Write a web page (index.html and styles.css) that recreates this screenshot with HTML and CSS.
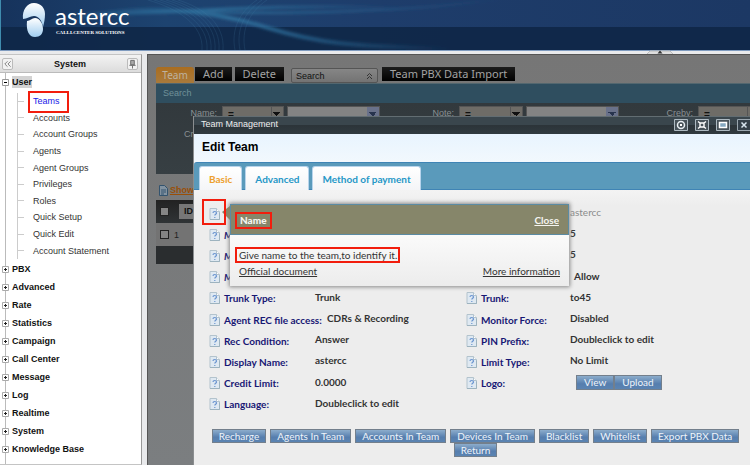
FILE: index.html
```html
<!DOCTYPE html>
<html lang="en">
<head>
<meta charset="utf-8">
<title>astercc - Team Management</title>
<link rel="stylesheet" href="styles.css">
</head>
<body>
<svg class="defs" aria-hidden="true">
  <defs>
    <symbol id="help" viewBox="0 0 11 12">
      <path d="M1 .5h6.500l3 3v8H1z" fill="#dfe9f2" stroke="#b3c3cd"/>
      <path d="M7.500 .5v3h3" fill="#fff" stroke="#b3c3cd"/>
      <path d="M1 11.500h9.500v-7" fill="none" stroke="#9db3bf"/>
      <path d="M4 5c0-2 3.500-2 3.500 0 0 1.300-1.700 1.200-1.700 2.500M5.800 9v1" fill="none" stroke="#6a94cf" stroke-width="1.200"/>
    </symbol>
    <symbol id="plus" viewBox="0 0 7 7">
      <path d="M.5 .5h6v6h-6z" fill="#fff" stroke="#aaa"/>
      <path d="M2 3.500h3M3.500 2v3" stroke="#222"/>
    </symbol>
  </defs>
</svg>

<header class="banner">
  <svg class="waves" viewBox="0 0 750 50" preserveAspectRatio="xMinYMin slice" aria-hidden="true">
    <defs>
      <linearGradient id="sky" x1="0" y1="0" x2="1" y2="0">
        <stop offset="0" stop-color="#16335c"/><stop offset=".22" stop-color="#1d4370"/><stop offset=".5" stop-color="#1e3d6b"/><stop offset="1" stop-color="#1c3864"/>
      </linearGradient>
      <linearGradient id="glow" x1="0" y1="0" x2="1" y2="0">
        <stop offset="0" stop-color="#2a6a9a" stop-opacity="0"/><stop offset=".45" stop-color="#2d6c98"/><stop offset="1" stop-color="#2a6a9a" stop-opacity="0"/>
      </linearGradient>
      <filter id="soft" x="-10%" y="-50%" width="120%" height="200%"><feGaussianBlur stdDeviation="1.500"/></filter>
    </defs>
    <path fill="url(#sky)" d="M0 0h750v50H0z"/>
    <path fill="#0f2748" d="M0 27h750v23H0z" opacity=".92"/>
    <g fill="none" stroke="url(#glow)" filter="url(#soft)">
      <path stroke-width="4" d="M50 25C130 0 210 10 265 27S350 46 450 49"/>
      <path stroke-width="2" d="M40 24C150 4 200 16 330 12S460 2 500 0"/>
      <path stroke-width="3" d="M60 14C130 18 250 2 400 8"/>
    </g>
    <g fill="none" stroke="#4b86ad" stroke-width=".6" opacity=".3">
      <path d="M148 0C176 8 204 24 202 50"/><path d="M154 0C182 8 209 24 207 50"/><path d="M160 0C188 8 213 24 211 50"/>
      <path d="M166 0C194 8 217 24 215 50"/><path d="M172 0C198 8 221 24 219 50"/><path d="M178 0C204 8 225 24 223 50"/>
      <path d="M240 50C236 30 244 12 262 0"/><path d="M245 50C241 30 249 12 267 0"/><path d="M235 50C231 30 239 12 257 0"/>
    </g>
    <path fill="#3f8cae" d="M0 0h1v50H0z"/>
  </svg>
  <svg class="logo" viewBox="0 0 24 36" aria-hidden="true">
    <defs><linearGradient id="ice" x1="0" y1="0" x2="0" y2="1"><stop offset="0" stop-color="#fff"/><stop offset="1" stop-color="#9fcdf0"/></linearGradient></defs>
    <path fill="url(#ice)" d="M1 17C0 8 5 1 12 1c7 0 11 5 11 11 0 5-1 9-2 13-1-6-4-11-9-11-4 0-7 3-11 3z"/>
    <path fill="url(#ice)" d="M5 19c3 0 5-3 8-3 5 0 8 6 8 11 0 5-3 8-8 8-6 0-9-6-8-16z"/>
  </svg>
  <div class="brand"><span class="name">astercc</span><span class="tagline">CALLLCENTER SOLUTIONS</span></div>
</header>

<div class="workspace">
  <nav class="sidebar" aria-label="System">
    <div class="side-head">
      <button class="tool" aria-label="Collapse"><svg viewBox="0 0 10 10"><path d="M5 2L2 5l3 3M8.500 2l-3 3 3 3" fill="none" stroke="#777"/></svg></button>
      <span>System</span>
      <button class="tool" aria-label="Pin"><svg viewBox="0 0 10 10"><path d="M3 1h4v5H3zM1.500 6.500h7M5 7v3" fill="#aaa" stroke="#666"/></svg></button>
    </div>
    <ul class="tree">
      <li class="open">
        <div class="node"><svg viewBox="0 0 7 7"><path d="M.5 .5h6v6h-6z" fill="#fff" stroke="#999"/><path d="M2 3.500h3" stroke="#000"/></svg><span class="current">User</span></div>
        <ul class="branch">
          <li><a class="active" href="#">Teams</a></li><li><a href="#">Accounts</a></li><li><a href="#">Account Groups</a></li><li><a href="#">Agents</a></li><li><a href="#">Agent Groups</a></li><li><a href="#">Privileges</a></li><li><a href="#">Roles</a></li><li><a href="#">Quick Setup</a></li><li><a href="#">Quick Edit</a></li><li><a href="#">Account Statement</a></li>
        </ul>
      </li>
      <li class="node"><svg><use href="#plus"/></svg>PBX</li>
      <li class="node"><svg><use href="#plus"/></svg>Advanced</li>
      <li class="node"><svg><use href="#plus"/></svg>Rate</li>
      <li class="node"><svg><use href="#plus"/></svg>Statistics</li>
      <li class="node"><svg><use href="#plus"/></svg>Campaign</li>
      <li class="node"><svg><use href="#plus"/></svg>Call Center</li>
      <li class="node"><svg><use href="#plus"/></svg>Message</li>
      <li class="node"><svg><use href="#plus"/></svg>Log</li>
      <li class="node"><svg><use href="#plus"/></svg>Realtime</li>
      <li class="node"><svg><use href="#plus"/></svg>System</li>
      <li class="node"><svg><use href="#plus"/></svg>Knowledge Base</li>
      <li class="node"><svg><use href="#plus"/></svg>Custom</li>
    </ul>
  </nav>

  <main class="main">
    <div class="toolbar">
      <button class="tab">Team</button>
      <button class="black">Add</button>
      <button class="black">Delete</button>
      <button class="search-toggle">Search<svg viewBox="0 0 7 8"><path d="M1 4l2.500-2.500L6 4M1 7l2.500-2.500L6 7" fill="none" stroke="#333"/></svg></button>
      <button class="black">Team PBX Data Import</button>
    </div>
    <h2 class="bar">Search</h2>
    <form class="filters">
      <label for="f1">Name:</label><select id="f1"><option>=</option></select><select class="pale" aria-label="Name value"><option></option></select>
      <label for="f2">Note:</label><select id="f2"><option>=</option></select><select class="pale" aria-label="Note value"><option></option></select>
      <label for="f3">Creby:</label><select id="f3"><option>=</option></select>
      <span class="second">Cr</span>
    </form>
    <a class="show" href="#"><svg viewBox="0 0 9 11"><path d="M.5 .5h5l3 3v7h-8zM2 5h5M2 7h5M2 9h3" fill="#8292a0" stroke="#33536e"/></svg><span>Show</span></a>
    <table class="list">
      <thead><tr><th><input type="checkbox" aria-label="Select all"></th><th><span class="id">ID</span></th></tr></thead>
      <tbody><tr><td><input type="checkbox" aria-label="Select row 1"></td><td>1</td></tr></tbody>
      <tfoot><tr><td colspan="2"></td></tr></tfoot>
    </table>
  </main>
</div>
<svg class="nub" viewBox="0 0 26 4" aria-hidden="true"><path d="M0 4L3 1h20l3 3" fill="#ddd" stroke="#bbb"/><path d="M10.500 3.500l2.500-3 2.500 3z" fill="#333"/></svg>

<section class="modal" aria-labelledby="modal-title">
  <div class="modal-head">
    <span id="modal-title">Team Management</span>
    <div class="window-tools">
      <button aria-label="Reload"><svg viewBox="0 0 14 12"><path d="M.5 .5h13v11H.5z" fill="#475259" stroke="#aebac2"/><circle cx="7" cy="6" r="3.500" fill="none" stroke="#e8eef2" stroke-width="1.500"/><path d="M6 5h2v2H6z" fill="#fff"/></svg></button>
      <button aria-label="Fit"><svg viewBox="0 0 14 12"><path d="M.5 .5h13v11H.5z" fill="#475259" stroke="#aebac2"/><path d="M5 4h4v4H5zM3 2.500l2 1.500M11 2.500L9 4M3 9.500L5 8M11 9.500L9 8" fill="none" stroke="#fff" stroke-width="1.400"/></svg></button>
      <button aria-label="Maximize"><svg viewBox="0 0 14 12"><path d="M.5 .5h13v11H.5z" fill="#475259" stroke="#aebac2"/><path d="M3.500 3.500h7v5h-7z" fill="#86a9c1" stroke="#fff" stroke-width="1.500"/></svg></button>
      <button aria-label="Close window"><svg viewBox="0 0 14 12"><path d="M.5 .5h13v11H.5z" fill="#34404a" stroke="#9aa6af"/><path d="M4.500 3.500l5 5M9.500 3.500l-5 5" stroke="#d8e5f0" stroke-width="1.500"/></svg></button>
    </div>
  </div>
  <h1>Edit Team</h1>
  <div class="tabs"><button class="selected">Basic</button><button>Advanced</button><button>Method of payment</button></div>
  <div class="panel">
    <dl class="fields">
      <dt><svg><use href="#help"/></svg></dt><dd></dd><dt></dt><dd class="muted">astercc</dd>
      <dt><svg><use href="#help"/></svg><em>M</em></dt><dd></dd><dt></dt><dd>5</dd>
      <dt><svg><use href="#help"/></svg><em>M</em></dt><dd></dd><dt></dt><dd>5</dd>
      <dt><svg><use href="#help"/></svg><em>M</em></dt><dd></dd><dt></dt><dd class="allow">Allow</dd>
      <dt><svg><use href="#help"/></svg>Trunk Type:</dt><dd>Trunk</dd><dt><svg><use href="#help"/></svg>Trunk:</dt><dd>to45</dd>
      <dt><svg><use href="#help"/></svg>Agent REC file access:</dt><dd class="inset">CDRs &amp; Recording</dd><dt><svg><use href="#help"/></svg>Monitor Force:</dt><dd>Disabled</dd>
      <dt><svg><use href="#help"/></svg>Rec Condition:</dt><dd>Answer</dd><dt><svg><use href="#help"/></svg>PIN Prefix:</dt><dd>Doubleclick to edit</dd>
      <dt><svg><use href="#help"/></svg>Display Name:</dt><dd>astercc</dd><dt><svg><use href="#help"/></svg>Limit Type:</dt><dd>No Limit</dd>
      <dt><svg><use href="#help"/></svg>Credit Limit:</dt><dd>0.0000</dd><dt><svg><use href="#help"/></svg>Logo:</dt><dd class="pair"><button class="blue">View</button><button class="blue">Upload</button></dd>
      <dt><svg><use href="#help"/></svg>Language:</dt><dd>Doubleclick to edit</dd>
    </dl>
    <div class="actions">
      <button class="blue">Recharge</button><button class="blue">Agents In Team</button><button class="blue">Accounts In Team</button><button class="blue">Devices In Team</button><button class="blue">Blacklist</button><button class="blue">Whitelist</button><button class="blue">Export PBX Data</button><button class="blue">Return</button>
    </div>
  </div>
</section>

<aside class="callout">
  <svg class="beak" viewBox="0 0 8 14" aria-hidden="true"><path d="M8 0v14L0 6z" fill="#86866a"/></svg>
  <div class="callout-head"><strong>Name</strong><a href="#">Close</a></div>
  <div class="callout-body">
    <p>Give name to the team,to identify it.</p>
    <div class="links"><a href="#">Official document</a><a href="#">More information</a></div>
  </div>
</aside>
<i class="mark mark-teams"></i><i class="mark mark-help"></i><i class="mark mark-name"></i><i class="mark mark-text"></i>
</body>
</html>
```
FILE: styles.css
```css
* { box-sizing: border-box; }
body { margin: 0; height: 100vh; overflow: hidden; position: relative; display: flex; flex-direction: column; background: #e9eaec; font: 9px "Liberation Sans", Arial, sans-serif; color: #222; }
button { font: inherit; border: 0; padding: 0; margin: 0; }
svg { display: block; flex: none; }
ul, dl, dd, p, h1, h2 { margin: 0; padding: 0; list-style: none; }
.defs { position: absolute; width: 0; height: 0; }

.banner { position: relative; flex: none; height: 51px; display: flex; padding: 2px 22px; border-bottom: 1px solid #7f9bbf; overflow: hidden; }
.waves { position: absolute; inset: 0; width: 100%; height: 100%; }
.logo { position: relative; width: 24px; height: 36px; }
.brand { position: relative; display: flex; flex-direction: column; padding-left: 9px; color: #fff; }
.name { font: 24px/28px Lato, sans-serif; }
.tagline { font: bold 5px/5px "Liberation Serif", serif; padding-left: 1px; }

.workspace { flex: 1; min-height: 0; display: flex; gap: 5px; padding-top: 3px; }
.sidebar { width: 142px; background: #fff; border: 1px solid #c4c4c4; border-left: 0; border-right: 1px solid #999; overflow: hidden; }
.side-head { height: 18px; display: flex; align-items: center; justify-content: space-between; padding: 0 3px 0 2px; background: linear-gradient(#f3f3f3, #dcdcdc); border-bottom: 1px solid #bbb; font-weight: bold; color: #111; }
.tool { width: 11px; height: 12px; background: #f2f2f2; border: 1px solid #bbb; border-radius: 2px; }
.tool svg { width: 9px; height: 10px; }
.tree { font-weight: bold; color: #111; background: linear-gradient(90deg, #bbb, #bbb) 5px 0 / 1px 100% no-repeat; }
.node { display: flex; align-items: center; height: 18px; padding-left: 2px; gap: 3px; }
.node svg { width: 7px; height: 7px; }
.current { background: #d2d2d2; line-height: 12px; }
.branch { height: 166px; margin: 2px 0 1px; display: grid; grid-template-rows: repeat(10, 1fr); font-weight: normal; }
.branch li { display: flex; align-items: center; margin-left: 17px; border-left: 1px solid #ccc; }
.branch li::before { content: ""; width: 6px; margin-right: 9px; border-top: 1px solid #ccc; }
.branch a { color: #333; text-decoration: none; }
.branch a.active { color: #2020e8; }

.main { flex: 1; min-width: 0; padding: 12px 0 0 8px; border-left: 1px solid #555; border-top: 1px solid #555; background: linear-gradient(#767676, #7b7e80); }
.toolbar { height: 16px; display: flex; align-items: flex-start; white-space: nowrap; font: 11px/14px "Noto Sans", sans-serif; }
.tab { width: 38px; height: 16px; border-radius: 3px 3px 0 0; background: linear-gradient(#a96d20, #a97a3c); color: #beb29e; margin-right: 1px; font-size: 10px; }
.black { height: 14px; background: linear-gradient(#1c1c1c, #000); color: #a3a3a3; padding: 0 8px; margin-right: 3px; }
.search-toggle { width: 87px; height: 15px; margin: 1px 4px 0; display: flex; justify-content: space-between; align-items: center; padding: 0 4px; border: 1px solid #555; border-radius: 2px; background: linear-gradient(#868686, #737373); color: #111; font: 9px "Liberation Sans", sans-serif; }
.search-toggle svg { width: 7px; height: 8px; }
.bar { height: 20px; padding-left: 7px; background: #2f4e5f; border-top: 1px solid #53676f; color: #6f9199; font: 9px/18px "Liberation Sans", sans-serif; }
.filters { height: 71px; display: grid; grid-template-columns: 63px 62px 93px 73px 64px 93px 73px 62px; column-gap: 3px; align-items: start; align-content: start; padding-top: 3px; background: linear-gradient(#32393d, #373f43); color: #899093; overflow: hidden; }
.filters label { text-align: right; line-height: 15px; padding-right: 2px; }
.filters select { appearance: none; width: 100%; height: 17px; border: 1px solid #555; border-radius: 0; color: #111; font: bold 10px/15px "Liberation Sans", sans-serif; padding: 0 5px; background: conic-gradient(from 315deg at 50% 100%, #111 90deg, transparent 90deg) right 2px top 5px / 8px 4px no-repeat, linear-gradient(90deg, transparent calc(100% - 12px), #555 calc(100% - 12px) calc(100% - 11px), transparent calc(100% - 11px)), #6e6c67; }
.filters .pale { background: conic-gradient(from 315deg at 50% 100%, #28344e 90deg, transparent 90deg) right 2px top 5px / 8px 4px no-repeat, linear-gradient(90deg, #838383 calc(100% - 12px), #69718a calc(100% - 12px)); }
.second { padding: 6px 0 0 28px; }
.show { display: flex; align-items: center; gap: 2px; height: 26px; padding: 6px 0 0 3px; color: #9a4f08; font-weight: bold; }
.show svg { width: 9px; height: 11px; }
.list { width: 100%; border-collapse: collapse; text-align: left; }
.list th, .list td { height: 23px; padding: 0 4px; }
.list th:first-child, .list td:first-child { width: 16px; }
.list input { appearance: none; display: block; width: 9px; height: 9px; margin: 0; border: 1px solid #222; background: #858585; }
.list th { background: linear-gradient(#222, #303436); }
.id { display: block; width: 60px; background: #777; color: #111; line-height: 15px; padding-left: 5px; margin-left: 2px; }
.list tbody td { background: #737373; }
.list tbody td:last-child { padding-left: 1px; }
.list tfoot td { height: 18px; background: #2a2d2f; }
.nub { position: absolute; left: 647px; top: 50px; width: 26px; height: 4px; }

.modal { position: absolute; left: 193px; right: 0; top: 116px; bottom: 0; display: flex; flex-direction: column; background: #ededed; border-left: 1px solid #8b8e90; }
.modal-head { height: 18px; flex: none; display: flex; justify-content: space-between; padding-left: 7px; color: #eee; line-height: 15px; background: linear-gradient(#3a464d 50%, #2c3439 50%, #303a40); border-top: 1px solid #626d72; }
.window-tools { display: flex; gap: 7px; padding-top: 2px; margin-right: -1px; }
.window-tools button { background: none; width: 14px; height: 12px; }
.window-tools svg { width: 14px; height: 12px; }
.modal h1 { height: 28px; flex: none; padding-left: 8px; background: linear-gradient(#e8f4ff, #f2f8fd); color: #000; font: bold 12px/27px "Liberation Sans", sans-serif; }
.tabs { height: 28px; flex: none; display: flex; gap: 3px; padding: 3px 0 0 5px; background: #5a9abb; border: 1px solid #3f84b5; border-width: 1px 0; font: bold 10px Lato, sans-serif; border-radius: 3px 0 0 0; }
.tabs button { padding: 0 9px; height: 24px; background: linear-gradient(#fff, #f4f5f7); color: #2597c7; border: 1px solid #b8d4ec; border-bottom: 0; border-radius: 3px 3px 0 0; }
.tabs .selected { color: #eda02d; height: 25px; }
.panel { flex: 1; padding: 13px 0 0 15px; background: linear-gradient(#f3f3f3, #ededed 16px); }
.fields { display: grid; grid-template-columns: 106px 151px 104px 1fr; grid-template-rows: repeat(10, 1fr); height: 212px; font: bold 10px Lato, sans-serif; color: #333; align-items: center; }
.fields dt { display: flex; align-items: center; gap: 4px; color: #171774; white-space: nowrap; }
.fields dt svg { width: 11px; height: 12px; }
.fields dd { line-height: 17px; padding-bottom: 2px; }
.fields .muted { color: #8b8b8b; font-weight: normal; }
.fields .inset { padding-left: 12px; }
.fields .allow { padding-left: 4px; }
.fields .pair { display: flex; padding-left: 6px; }
.blue { height: 14px; padding: 0 6px; border: 1px solid #737f8c; background: linear-gradient(#8cadcc, #567eae 60%, #5b84b2); color: #eef4fa; font: 10px/12px Lato, sans-serif; white-space: nowrap; }
.pair .blue { height: 15px; padding: 0 7px; }
.actions { display: flex; flex-wrap: wrap; justify-content: center; column-gap: 4px; padding: 14px 8px 0 0; }

.callout { position: absolute; left: 230px; top: 204px; width: 339px; height: 82px; background: linear-gradient(#fafafa 40%, #ececec); box-shadow: 0 0 4px 1px #888; font: 10px Lato, sans-serif; color: #333; }
.beak { position: absolute; left: -8px; top: 2px; width: 8px; height: 14px; }
.callout-head { height: 31px; display: flex; justify-content: space-between; align-items: center; padding: 0 9px; background: #86866a; border: 1px solid #5b8ba3; color: #f5f5f0; font-weight: 700; }
.callout a { color: inherit; }
.callout-body { padding: 12px 9px 0; }
.callout p, .links { line-height: 16px; }
.links { display: flex; justify-content: space-between; }
.mark { position: absolute; border: 2px solid #f21d0d; }
.mark-teams { left: 28px; top: 91px; width: 41px; height: 22px; }
.mark-help { left: 202px; top: 199px; width: 24px; height: 26px; }
.mark-name { left: 235px; top: 212px; width: 37px; height: 17px; }
.mark-text { left: 235px; top: 247px; width: 165px; height: 16px; }
```
